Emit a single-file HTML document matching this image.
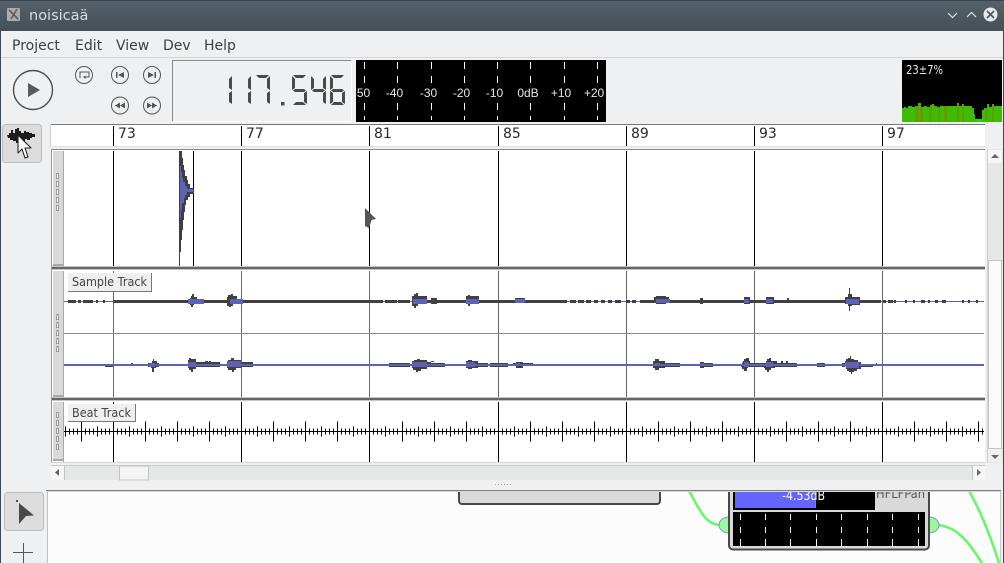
<!DOCTYPE html>
<html><head><meta charset="utf-8"><title>noisicaä</title>
<style>
html,body{margin:0;padding:0;background:#eff0f1;overflow:hidden;width:1004px;height:563px}
svg{position:absolute;left:0;top:0;display:block}
text{font-family:"DejaVu Sans","Liberation Sans",sans-serif}
</style></head><body>
<svg width="1004" height="563" viewBox="0 0 1004 563" xmlns="http://www.w3.org/2000/svg">
<defs>
<linearGradient id="tb" x1="0" y1="0" x2="0" y2="1"><stop offset="0" stop-color="#56626b"/><stop offset="1" stop-color="#444f57"/></linearGradient>
<clipPath id="canvas"><rect x="49" y="492" width="951" height="71"/></clipPath>
<clipPath id="beat"><rect x="64" y="402" width="920" height="60"/></clipPath>
<clipPath id="meter"><rect x="356" y="60" width="250" height="62"/></clipPath>
<clipPath id="cpu"><path d="M902 122V108H904V107H906V108H908V106H912V107H915V106H918V103H921V107H924V106H927V107H930V105H932V104H934V106H937V107H940V106H957V103H959V106H962V104H964V106H972V108H974V114H975V119H982V110H984V108H987V104H989V107H992V104H994V106H1002V122Z"/></clipPath>
<g id="a"><path d="M1 0H14L11 3H4Z"/></g>
<g id="b"><path d="M15 1V15L12 13V4Z"/></g>
<g id="c"><path d="M15 16V29L12 27V18Z"/></g>
<g id="d"><path d="M1 30L4 27H11L14 30Z"/></g>
<g id="e"><path d="M0 16L3 18V27L0 29Z"/></g>
<g id="f"><path d="M0 1L3 4V13L0 15Z"/></g>
<g id="g"><path d="M1 15.5L3 14H12L14 15.5L12 17H3Z"/></g>
<g id="bt"><path d="M0 -10V10M4 -3V3M8 -3V3M12 -3V3M16 -5V5M20 -3V3M24 -3V3M28 -3V3" stroke="#000" stroke-width="1" fill="none"/></g>
<g id="mt"><path d="M0 0V7M0 14V21M0 41V48M0 54V58" stroke="#fff" stroke-width="1" fill="none"/></g>
<g id="nt"><path d="M0 0V6M0 13V19M0 25V32" stroke="#fff" stroke-width="1" fill="none"/></g>
</defs>

<!-- window -->
<rect width="1004" height="563" fill="#eff0f1"/>
<rect width="1004" height="31" fill="url(#tb)"/>
<rect width="1004" height="1" fill="#3a444c"/>
<rect x="0" y="31" width="1" height="532" fill="#3d4850"/>
<rect x="1003" y="31" width="1" height="532" fill="#3d4850"/>
<rect x="7" y="8" width="13" height="13" rx="1" fill="#a9abac"/>
<path d="M9 10L18 19M17 9L11 19" stroke="#6a5a52" stroke-width="1.6"/>
<text x="29" y="20" font-size="14.5" fill="#d8dcdf">noisicaä</text>
<path d="M948 13L952.5 17.5L957 13M967 17L971.500 12.500L976 17" stroke="#dfe2e4" stroke-width="1.2" fill="none"/>
<circle cx="990.500" cy="14.500" r="7" fill="#e6e8ea"/>
<path d="M987 11L994 18M994 11L987 18" stroke="#4a555d" stroke-width="1.6"/>

<!-- menu -->
<g font-size="14" fill="#3c4044">
<text x="12" y="50">Project</text><text x="75" y="50">Edit</text><text x="116" y="50">View</text><text x="163" y="50">Dev</text><text x="204" y="50">Help</text>
</g>
<rect x="1" y="57" width="1002" height="1" fill="#d2d4d6"/>

<!-- transport -->
<circle cx="33" cy="90" r="19.500" fill="none" stroke="#4d4d4d" stroke-width="1.400"/>
<path d="M28 83L40 90L28 97Z" fill="#5a5a5a"/>
<g fill="none" stroke="#555" stroke-width="1">
<circle cx="84" cy="75" r="8.500"/><circle cx="120" cy="75" r="8.500"/><circle cx="152" cy="75" r="8.500"/><circle cx="120" cy="105.500" r="8.500"/><circle cx="152" cy="105.500" r="8.500"/>
<path d="M80 78V72H89V77H85"/>
</g>
<path d="M83 77L85.500 75.500V79Z" fill="#555"/>
<g fill="#555">
<path d="M116 72h1.500v6H116ZM124 72V78L118 75Z"/>
<path d="M156 72h-1.500v6H156ZM148 72V78L154 75Z"/>
<path d="M115 105.500L120 102.500V108.500ZM120 105.500L125 102.500V108.500Z"/>
<path d="M157 105.500L152 102.500V108.500ZM152 105.500L147 102.500V108.500Z"/>
</g>

<!-- LCD -->
<path d="M172.500 121V60.500H351" stroke="#8c8c8c" fill="none"/>
<path d="M173 121.500H351.500V61" stroke="#fff" fill="none"/>
<g fill="#4a4a4a">
<g transform="translate(217 75)"><use href="#b"/><use href="#c"/></g>
<g transform="translate(236 75)"><use href="#b"/><use href="#c"/></g>
<g transform="translate(255 75)"><use href="#a"/><use href="#b"/><use href="#c"/></g>
<rect x="281" y="102" width="3.500" height="3.500"/>
<g transform="translate(292 75)"><use href="#a"/><use href="#f"/><use href="#g"/><use href="#c"/><use href="#d"/></g>
<g transform="translate(311 75)"><use href="#f"/><use href="#g"/><use href="#b"/><use href="#c"/></g>
<g transform="translate(330 75)"><use href="#a"/><use href="#f"/><use href="#g"/><use href="#c"/><use href="#d"/><use href="#e"/></g>
</g>

<!-- VU -->
<rect x="356" y="60" width="250" height="62" fill="#000"/>
<g transform="translate(0.500 62)">
<use href="#mt" x="364"/><use href="#mt" x="397"/><use href="#mt" x="431"/><use href="#mt" x="464"/><use href="#mt" x="497"/><use href="#mt" x="530"/><use href="#mt" x="564"/><use href="#mt" x="597"/>
</g>
<g clip-path="url(#meter)" fill="#e6e6e6" font-size="12" text-anchor="middle">
<text x="361.500" y="97" style="font-family:'Liberation Sans',sans-serif">-50</text>
<text x="394.500" y="97" style="font-family:'Liberation Sans',sans-serif">-40</text>
<text x="428.500" y="97" style="font-family:'Liberation Sans',sans-serif">-30</text>
<text x="461.500" y="97" style="font-family:'Liberation Sans',sans-serif">-20</text>
<text x="494.500" y="97" style="font-family:'Liberation Sans',sans-serif">-10</text>
<text x="528" y="97" style="font-family:'Liberation Sans',sans-serif">0dB</text>
<text x="561" y="97" style="font-family:'Liberation Sans',sans-serif">+10</text>
<text x="594" y="97" style="font-family:'Liberation Sans',sans-serif">+20</text>
</g>

<!-- CPU -->
<rect x="902" y="60" width="100" height="62" fill="#000"/>
<text x="906" y="74" font-size="12" fill="#e8e8e8" textLength="37" lengthAdjust="spacingAndGlyphs">23±7%</text>
<g clip-path="url(#cpu)">
<rect x="902" y="100" width="100" height="22" fill="#3fbb00"/>
<g fill="#5f9e00"><rect x="915" y="100" width="4" height="22"/><rect x="920" y="100" width="3" height="22"/><rect x="929" y="100" width="3" height="22"/><rect x="938" y="100" width="2" height="22"/><rect x="944" y="100" width="3" height="22"/><rect x="957" y="100" width="2" height="22"/><rect x="962" y="100" width="2" height="22"/><rect x="985" y="100" width="3" height="22"/><rect x="992" y="100" width="2" height="22"/></g>
<rect x="975" y="119" width="7" height="3" fill="#0be000"/>
</g>

<!-- side tool -->
<rect x="2.500" y="124.500" width="39" height="38" rx="3" fill="#dcdcdc" stroke="#bdbdbd"/>
<path d="M7 135h2v-2h2v-3h2v3h2v-4h2v-1h2v3h2v2h3v-2h2v1h3v1h3v1h3v3h-3v1h-2v2h-3v-1h-2v2h-3v4h-4v-2h-2v-2h-3v-1h-3v-2h-2Z" fill="#1c1c1c"/>
<path d="M18 135V153L22 149L25 158L28 157L25 148L31 148Z" fill="#fff" stroke="#222" stroke-width="1.100" stroke-linejoin="round"/>

<!-- ruler -->
<rect x="51" y="125" width="934" height="21" fill="#fff"/>
<rect x="51" y="124" width="934" height="1" fill="#777"/>
<rect x="51" y="146" width="934" height="1" fill="#e0e0e0"/>
<rect x="50" y="125" width="1" height="22" fill="#ccc"/>
<g stroke="#000" stroke-width="1"><path d="M113.500 126V146M241.500 126V146M369.500 126V146M498.500 126V146M626.500 126V146M754.500 126V146M882.500 126V146"/></g>
<g font-size="14" fill="#2a2a2a"><text x="118" y="138">73</text><text x="246" y="138">77</text><text x="374" y="138">81</text><text x="503" y="138">85</text><text x="631" y="138">89</text><text x="759" y="138">93</text><text x="887" y="138">97</text></g>

<!-- tracks -->
<rect x="51" y="149" width="934" height="313" fill="#fff"/>
<rect x="51" y="149" width="934" height="1" fill="#888"/>
<rect x="51" y="149" width="1" height="314" fill="#999"/>
<rect x="51" y="462" width="934" height="1" fill="#d4d4d4"/>

<!-- handles -->
<g fill="#d9d9d9">
<rect x="53" y="151" width="10" height="115"/><rect x="53" y="271" width="10" height="126"/><rect x="53" y="402" width="10" height="58"/>
</g>
<g fill="#a8a8a8"><rect x="63" y="151" width="1" height="115"/><rect x="63" y="271" width="1" height="126"/><rect x="63" y="402" width="1" height="60"/><rect x="53" y="264" width="10" height="2"/><rect x="53" y="395" width="10" height="2"/><rect x="53" y="459" width="10" height="2"/></g>
<g fill="#fff" stroke="#9a9a9a" stroke-width="1">
<path d="M56.500 173.500h2v5h-2ZM56.500 181.500h2v5h-2ZM56.500 189.500h2v5h-2ZM56.500 197.500h2v5h-2ZM56.500 205.500h2v5h-2Z"/>
<path d="M56.500 314.500h2v5h-2ZM56.500 322.500h2v5h-2ZM56.500 330.500h2v5h-2ZM56.500 338.500h2v5h-2ZM56.500 346.500h2v5h-2Z"/>
<path d="M56.500 412.500h2v5h-2ZM56.500 420.500h2v5h-2ZM56.500 428.500h2v5h-2ZM56.500 436.500h2v5h-2ZM56.500 444.500h2v5h-2Z"/>
</g>

<!-- bar lines -->
<path d="M113.500 151V266M241.500 151V266M369.500 151V266M498.500 151V266M626.500 151V266M754.500 151V266M882.500 151V266M193.500 151V266M113.500 402V462M241.500 402V462M369.500 402V462M498.500 402V462M626.500 402V462M754.500 402V462M882.500 402V462" stroke="#000" stroke-width="1"/>
<path d="M113.500 271V397M241.500 271V397M369.500 271V397M498.500 271V397M626.500 271V397M754.500 271V397M882.500 271V397" stroke="#6a6a6a" stroke-width="1"/>

<!-- transient -->
<path d="M179 151H182V158H183V165H184V170H185V176H187V180H188V184H190V188H194V194H190V197H188V200H186V205H185V212H184V220H183V230H182V240H181V252H180V266H179Z" fill="#3f3f3f"/>
<path d="M180 166H181V172H182V178H183V182H185V186H187V189H193V192H187V195H185V198H184V203H182V210H181V218H180Z" fill="#5d62b2"/>

<!-- mouse cursor -->
<path d="M365 208L376 219L371.500 220L369 228L365 226Z" fill="#555"/>

<!-- separators -->
<rect x="52" y="266" width="933" height="4" fill="#c4c4c4"/><rect x="52" y="267" width="933" height="2" fill="#666"/>
<rect x="52" y="397" width="933" height="4" fill="#c4c4c4"/><rect x="52" y="398" width="933" height="2" fill="#666"/>

<!-- sample track -->
<rect x="64" y="333" width="920" height="1" fill="#8c8c8c"/>
<!-- channel 1 -->
<rect x="64" y="301" width="920" height="1" fill="#5d62b2"/>
<g fill="#404040">
<path d="M68 300h8v3h-8ZM78 300h3v3h-3ZM83 300h10v3h-10ZM96 300h2v3h-2ZM103 300h2v3h-2ZM113 300h60v3h-60ZM173 300h11v3h-11Z"/>
<path d="M184 300h6v-2h1v-2h1v-2h2v3h3v6h-3v2h-1v2h-2v-2h-1v-2h-6Z"/>
<path d="M198 300h40v3h-40ZM227 297h1v-2h3v-1h2v2h4v8h-4v2h-2v1h-2v-1h-2Z"/>
<path d="M238 300h135v3h-135ZM248 300h2v3h-2ZM373 300h10v3h-10Z"/>
<path d="M385 300h12v3h-12ZM398 300h12v3h-12ZM412 296h2v-2h2v-1h2v3h9v8h-9v2h-2v2h-2v-2h-2Z"/>
<path d="M427 300h50v3h-50ZM431 298h6v6h-6ZM466 296h2v-1h2v1h9v8h-9v2h-2v-2h-2Z"/>
<path d="M479 300h36v3h-36ZM515 298h10v5h-10ZM525 300h42v3h-42Z"/>
<path d="M570 300h6v3h-6ZM578 300h6v3h-6ZM586 300h5v3h-5ZM594 300h4v3h-4ZM601 300h4v3h-4ZM608 300h4v3h-4ZM615 300h6v3h-6ZM626 300h4v3h-4ZM632 300h4v3h-4ZM640 300h14v3h-14Z"/>
<path d="M654 297h2v-1h10v1h3v6h-3v1h-10v-1h-2ZM669 300h75v3h-75ZM700 298h3v6h-3Z"/>
<path d="M744 297h6v7h-6ZM750 300h16v3h-16ZM766 297h8v7h-8ZM774 300h71v3h-71ZM787 298h2v5h-2Z"/>
<path d="M845 297h3v-3h1v-6h1v6h2v3h8v8h-8v1h-2v5h-1v-5h-1v-2h-3ZM860 300h17v3h-17Z"/>
<path d="M877 300h4v3h-4ZM883 300h3v3h-3ZM888 300h5v3h-5ZM894 300h2v3h-2ZM905 300h2v3h-2ZM913 300h2v3h-2ZM921 300h4v3h-4ZM928 300h2v3h-2ZM935 300h3v3h-3ZM942 300h4v3h-4ZM962 300h2v3h-2ZM968 300h2v3h-2ZM976 300h2v3h-2Z"/>
</g>
<g fill="#5d62b2"><rect x="188" y="299" width="16" height="5"/><rect x="230" y="299" width="13" height="5"/><rect x="413" y="299" width="14" height="5"/><rect x="466" y="299" width="13" height="5"/><rect x="515" y="299" width="10" height="4"/><rect x="656" y="299" width="14" height="4"/><rect x="744" y="299" width="5" height="4"/><rect x="766" y="299" width="7" height="4"/><rect x="846" y="299" width="13" height="5"/><rect x="113" y="301" width="1" height="1"/></g>
<!-- channel 2 -->
<g fill="#404040">
<path d="M105 364h8v3h-8ZM127 364h2v2h-2ZM131 363h2v3h-2ZM134 364h3v2h-3ZM148 363h4v-2h1v-2h1v2h3v2h2v4h-3v1h-2v4h-2v-4h-1v-1h-3Z"/>
<path d="M188 360h1v-2h2v1h5v3h24v5h-24v2h-3v3h-2v-2h-2v-2h-1ZM205 361h3v1h-3ZM209 361h2v1h-2Z"/>
<path d="M227 361h1v-1h3v-2h3v2h7v2h12v5h-12v1h-5v2h-2v2h-2v-2h-4v-2h-1Z"/>
<path d="M389 363h21v4h-21ZM412 361h2v-1h3v-1h3v1h7v2h4v1h-4v6h-6v2h-3v1h-2v-2h-3v-2h-1ZM427 363h18v4h-18ZM431 361h3v1h-3Z"/>
<path d="M466 361h2v-1h4v1h6v2h10v4h-10v1h-6v1h-4v-1h-2ZM490 363h18v4h-18ZM513 363h3v-1h7v1h10v3h-10v2h-7v-2h-3Z"/>
<path d="M653 361h2v-2h4v2h6v2h15v4h-15v1h-6v2h-4v-2h-2ZM680 364h4v2h-4ZM686 364h2v2h-2ZM700 362h4v1h9v4h-9v1h-4Z"/>
<path d="M743 361h1v-2h2v-1h3v3h1v2h16v-2h1v-2h2v-1h2v3h4v2h22v4h-22v1h-4v2h-2v2h-2v-2h-2v-2h-1v-1h-16v1h-1v3h-3v-2h-2v-2h-1Z"/>
<path d="M775 361h2v2h-2ZM781 361h2v2h-2ZM786 361h2v2h-2ZM817 363h8v4h-8ZM828 364h2v2h-2ZM838 364h2v2h-2Z"/>
<path d="M845 361h1v-2h2v-1h2v-2h1v3h3v1h4v2h3v2h12v3h-12v2h-4v2h-3v1h-2v2h-1v-2h-2v-1h-2v-2h-1ZM842 363h3v4h-3ZM876 363h1v2h-1Z"/>
</g>
<rect x="64" y="364" width="920" height="2" fill="#5d62b2"/>
<g fill="#5d62b2"><rect x="149" y="363" width="6" height="4"/><rect x="188" y="362" width="8" height="5"/><rect x="227" y="361" width="14" height="6"/><rect x="412" y="362" width="15" height="5"/><rect x="466" y="362" width="9" height="5"/><rect x="516" y="363" width="4" height="3"/><rect x="655" y="363" width="5" height="3"/><rect x="701" y="363" width="3" height="3"/><rect x="744" y="362" width="5" height="5"/><rect x="766" y="362" width="7" height="5"/><rect x="846" y="362" width="13" height="6"/></g>

<!-- beat track -->
<g clip-path="url(#beat)">
<rect x="64" y="431" width="920" height="1" fill="#000"/>
<g transform="translate(0.500 431.500)">
<use href="#bt" x="49"/><use href="#bt" x="81"/><use href="#bt" x="113"/><use href="#bt" x="145"/><use href="#bt" x="177"/><use href="#bt" x="209"/><use href="#bt" x="241"/><use href="#bt" x="273"/><use href="#bt" x="305"/><use href="#bt" x="337"/><use href="#bt" x="369"/><use href="#bt" x="402"/><use href="#bt" x="434"/><use href="#bt" x="466"/><use href="#bt" x="498"/><use href="#bt" x="530"/><use href="#bt" x="562"/><use href="#bt" x="594"/><use href="#bt" x="626"/><use href="#bt" x="658"/><use href="#bt" x="690"/><use href="#bt" x="722"/><use href="#bt" x="754"/><use href="#bt" x="786"/><use href="#bt" x="818"/><use href="#bt" x="850"/><use href="#bt" x="882"/><use href="#bt" x="914"/><use href="#bt" x="946"/><use href="#bt" x="978"/>
</g>
</g>

<!-- labels -->
<rect x="68" y="273" width="83" height="18" fill="#efefef"/>
<path d="M151.500 273V291.500H68" stroke="#777" fill="none"/>
<text x="72" y="286" font-size="12" fill="#444" textLength="75" lengthAdjust="spacingAndGlyphs">Sample Track</text>
<rect x="68" y="404" width="67" height="17" fill="#efefef"/>
<path d="M135.500 404V421.500H68" stroke="#777" fill="none"/>
<text x="72" y="417" font-size="12" fill="#444" textLength="59" lengthAdjust="spacingAndGlyphs">Beat Track</text>

<!-- v scrollbar -->
<rect x="987" y="149" width="16" height="314" fill="#e6e7e7"/>
<rect x="987" y="149" width="1" height="314" fill="#d0d0d0"/>
<rect x="988" y="150" width="14" height="13" fill="#f6f6f6"/>
<path d="M991 158L995 154L999 158Z" fill="#666"/>
<rect x="988.500" y="260.500" width="13" height="188" fill="#fafafa" stroke="#c4c4c4"/>
<rect x="988" y="449" width="14" height="13" fill="#f0f0f0"/>
<path d="M991 455L995 459L999 455Z" fill="#666"/>

<!-- h scrollbar -->
<rect x="51" y="465" width="934" height="15" fill="#e6e7e7"/>
<rect x="51" y="465" width="934" height="1" fill="#c8c8c8"/>
<rect x="51" y="466" width="13" height="14" fill="#f6f6f6"/>
<rect x="64" y="466" width="1" height="14" fill="#c4c4c4"/>
<path d="M59 469V476L55 472.500Z" fill="#666"/>
<rect x="119.500" y="466" width="29" height="14" fill="#f4f4f4" stroke="#c4c4c4"/>
<rect x="972" y="466" width="13" height="14" fill="#f6f6f6"/>
<rect x="972" y="466" width="1" height="14" fill="#c4c4c4"/>
<path d="M977 469V476L981 472.500Z" fill="#666"/>

<!-- splitter -->
<path d="M495 484.500h1M498 484.500h1M501 484.500h1M504 484.500h1M507 484.500h1M510 484.500h1" stroke="#aaa" stroke-width="1"/>

<!-- second tool buttons -->
<rect x="4.500" y="492.500" width="39" height="38" rx="3" fill="#dcdcdc" stroke="#bdbdbd"/>
<path d="M19 503L34 515.500L26 516L19 524Z" fill="#484848"/>
<rect x="16" y="500" width="2" height="2" fill="#555"/>
<path d="M13 552.500H33M23.500 543V563" stroke="#555" stroke-width="1"/>

<!-- canvas frame -->
<rect x="47" y="490" width="954" height="73" fill="#fcfcfc"/>
<rect x="46" y="490" width="955" height="1" fill="#808080"/>
<rect x="47" y="491" width="953" height="1" fill="#d8d8d8"/>
<rect x="47" y="491" width="1" height="72" fill="#c0c0c0"/>
<rect x="1000" y="491" width="1" height="72" fill="#c8c8c8"/>

<g clip-path="url(#canvas)">
<path d="M689 491C700 510 705 525 721 525" stroke="#6cf46c" stroke-width="2.600" fill="none"/>
<path d="M935 525C955 525 968 540 983 565" stroke="#6cf46c" stroke-width="2.600" fill="none"/>
<path d="M969 491C980 510 990 535 999 563" stroke="#6cf46c" stroke-width="2.600" fill="none"/>

<rect x="459" y="480" width="201" height="24" rx="3" fill="#d9d9d9" stroke="#484848" stroke-width="2"/>

<path d="M729 517A10 8 0 0 0 729 533Z" fill="#9cf89c" stroke="#8098c8" stroke-width="1"/>
<path d="M929 517A10 8 0 0 1 929 533Z" fill="#9cf89c" stroke="#8098c8" stroke-width="1"/>

<rect x="729" y="480" width="200" height="69.500" rx="4" fill="#d9d9d9" stroke="#484848" stroke-width="2"/>
<rect x="733" y="488" width="142" height="22" fill="#000"/>
<rect x="735" y="488" width="80" height="20" fill="#6464ff"/>
<rect x="815" y="488" width="1" height="20" fill="#e8604c"/>
<text x="782" y="500" font-size="13" fill="#fff" textLength="43" lengthAdjust="spacingAndGlyphs">-4.53dB</text>
<text x="876" y="498" font-size="12" fill="#555" textLength="49" lengthAdjust="spacingAndGlyphs">HFLFPan</text>
<rect x="733" y="512" width="192" height="34" fill="#000"/>
<g transform="translate(0.500 514)">
<use href="#nt" x="740"/><use href="#nt" x="765"/><use href="#nt" x="790"/><use href="#nt" x="816"/><use href="#nt" x="841"/><use href="#nt" x="867"/><use href="#nt" x="892"/><use href="#nt" x="918"/>
</g>
</g>
</svg>
</body></html>
